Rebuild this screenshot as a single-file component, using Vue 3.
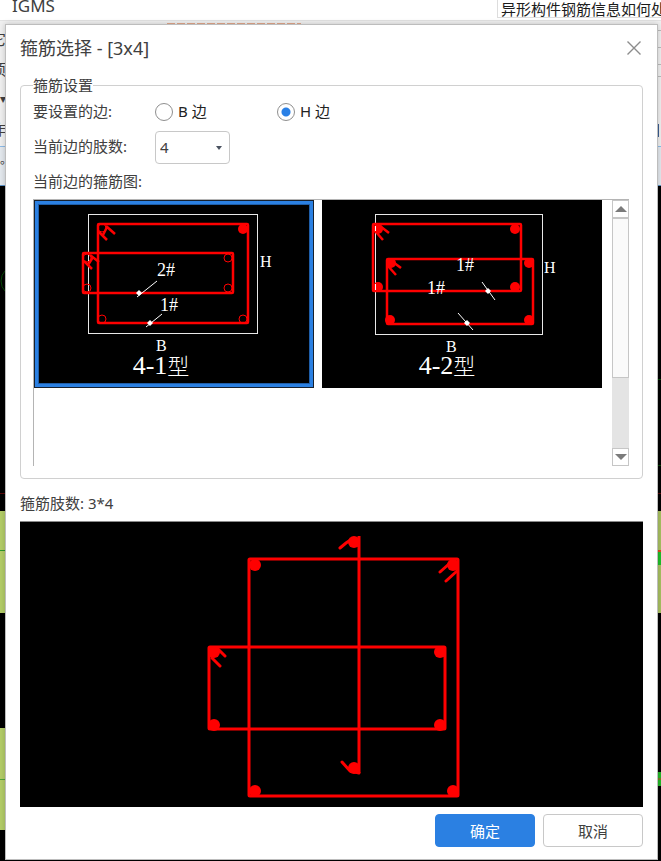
<!-- StirrupDialog.vue -->
<template>
  <div class="page">
    <div class="host-window">
      <header class="host-header">
        <span class="host-name">IGMS</span>
        <button type="button" class="host-tip">异形构件钢筋信息如何处</button>
      </header>
      <div class="host-ribbon">
        <div class="ribbon-marks"></div>
        <div class="ribbon-rows">
          <div class="ribbon-left">
            <span>它</span>
            <span>项</span>
            <span class="ribbon-arrow">▾</span>
            <span>作</span>
          </div>
          <div class="ribbon-right">
            <i class="ribbon-box"></i>
            <i class="ribbon-box small"></i>
            <i class="ribbon-bar"></i>
          </div>
        </div>
      </div>
      <div class="host-tabs"><span>。</span></div>
      <div class="host-canvas">
        <svg class="canvas-edge" viewBox="0 0 6 675" width="6" height="675" aria-hidden="true">
          <circle cx="16" cy="95" r="15" fill="none" stroke="#064a06" />
          <rect y="307" width="6" height="1" fill="#5a0808" />
          <rect y="325" width="6" height="102" fill="#b4cd68" />
          <rect y="364" width="6" height="1" fill="#2e9a2e" />
          <rect y="542" width="6" height="102" fill="#b4cd68" />
          <rect y="593" width="6" height="1" fill="#4ea53a" />
        </svg>
        <svg class="canvas-edge" viewBox="0 0 4 675" width="4" height="675" aria-hidden="true">
          <rect y="193" width="4" height="1" fill="#064a06" />
          <rect y="279" width="4" height="1" fill="#064a06" />
          <rect y="307" width="4" height="1" fill="#5a0808" />
          <rect y="325" width="4" height="102" fill="#a9c162" />
          <rect y="364" width="4" height="2" fill="#e04a20" />
          <rect y="366" width="4" height="13" fill="#1fc02a" />
          <rect y="586" width="4" height="14" fill="#24b828" />
          <rect y="592" width="4" height="2" fill="#7a7a20" />
        </svg>
      </div>
    </div>

    <div class="dialog" role="dialog" aria-labelledby="dialog-title">
      <div class="title-bar">
        <h1 id="dialog-title">箍筋选择 - [3x4]</h1>
        <button type="button" class="close-btn" aria-label="关闭">
          <svg viewBox="0 0 14 14" width="14" height="14">
            <path d="M0.5 0.5 L13.5 13.5 M13.5 0.5 L0.5 13.5" stroke="#8c8c8c" stroke-width="1.4" />
          </svg>
        </button>
      </div>

      <fieldset class="settings">
        <legend>箍筋设置</legend>
        <div class="form-row" role="radiogroup" aria-labelledby="side-label">
          <span id="side-label" class="row-label">要设置的边:</span>
          <label v-for="s in sides" :key="s" class="radio">
            <input v-model="side" type="radio" name="side" :value="s" />
            <span>{{ s }} 边</span>
          </label>
        </div>
        <div class="form-row limb-row">
          <label class="row-label" for="limbs">当前边的肢数:</label>
          <div class="select-wrap">
            <select id="limbs" v-model="limbs">
              <option v-for="n in limbOptions" :key="n" :value="n">{{ n }}</option>
            </select>
            <svg class="select-arrow" viewBox="0 0 6 4" width="6" height="4" aria-hidden="true">
              <path d="M0 0 H6 L3 4 Z" fill="#4a5260" />
            </svg>
          </div>
        </div>
        <div class="form-row">
          <span class="row-label">当前边的箍筋图:</span>
        </div>

        <div class="gallery">
          <div class="gallery-items">
            <button
              v-for="t in types"
              :key="t.name"
              type="button"
              class="type-item"
              :class="{ selected: t.name === current }"
              :aria-pressed="t.name === current"
              @click="current = t.name"
            >
              <svg viewBox="0 0 280 188">
                <rect
                  :x="t.frame[0]" :y="t.frame[1]" :width="t.frame[2]" :height="t.frame[3]"
                  class="concrete"
                />
                <rect
                  v-for="(r, i) in t.hoops" :key="'r' + i"
                  :x="r[0]" :y="r[1]" :width="r[2]" :height="r[3]" rx="1"
                  class="rebar"
                />
                <circle
                  v-for="(c, i) in t.rings" :key="'o' + i"
                  :cx="c[0]" :cy="c[1]" r="4" class="ring"
                />
                <circle
                  v-for="(c, i) in t.bars" :key="'c' + i"
                  :cx="c[0]" :cy="c[1]" r="5" class="bar"
                />
                <path :d="t.hooks" class="rebar" />
                <path :d="t.leaders" class="leader" />
                <path
                  v-for="(p, i) in t.points" :key="'p' + i"
                  :d="`M${p[0] - 3} ${p[1]} l3 -3 l3 3 l-3 3 Z`" fill="#fff"
                />
                <text
                  v-for="(m, i) in t.marks" :key="'m' + i"
                  :x="m.x" :y="m.y" :class="m.cls"
                >{{ m.text }}</text>
                <text :x="t.nameX" y="174" class="type-name">{{ t.name }}<tspan class="cjk">型</tspan></text>
              </svg>
            </button>
          </div>
          <div class="scrollbar">
            <button type="button" class="scroll-btn" aria-label="向上">
              <svg viewBox="0 0 12 6" width="12" height="6"><path d="M0 6 L6 0 L12 6 Z" fill="#7b7b7b" /></svg>
            </button>
            <div class="scroll-thumb"></div>
            <button type="button" class="scroll-btn end" aria-label="向下">
              <svg viewBox="0 0 12 6" width="12" height="6"><path d="M0 0 H12 L6 6 Z" fill="#7b7b7b" /></svg>
            </button>
          </div>
        </div>
      </fieldset>

      <p class="summary">箍筋肢数: 3*4</p>

      <div class="preview">
        <svg viewBox="0 0 623 285">
          <rect x="229" y="37" width="209" height="237" rx="1" class="rebar" />
          <rect x="189" y="125" width="236" height="82" rx="1" class="rebar" />
          <path d="M339 14 V251" class="rebar" />
          <circle v-for="(c, i) in previewBars" :key="i" :cx="c[0]" :cy="c[1]" r="6" class="bar" />
          <path :d="previewHooks" class="rebar hook" />
        </svg>
      </div>

      <div class="actions">
        <button type="button" class="btn primary">确定</button>
        <button type="button" class="btn">取消</button>
      </div>
    </div>
  </div>
</template>

<script setup>
import { ref } from 'vue';

const sides = ['B', 'H'];
const side = ref('H');
const limbOptions = [2, 3, 4, 5, 6];
const limbs = ref(4);
const current = ref('4-1');

const types = [
  {
    name: '4-1',
    nameX: 127,
    frame: [54.5, 14.5, 169, 119],
    hoops: [[64, 24, 150, 99], [49, 53, 150, 40]],
    rings: [[68, 28], [68, 119], [209, 119], [53, 58], [53, 88], [194, 58], [194, 88]],
    bars: [[209, 29]],
    hooks: 'M72 26 L81 34 M65 32 L73 40 M69 35 L73 27 M56 55 L65 62 M50 61 L58 69 M54 65 L59 57',
    leaders: 'M103 97 L123 81 M112 127 L128 114',
    points: [[105, 93], [116, 123]],
    marks: [
      { text: '2#', x: 123, y: 76, cls: 'num' },
      { text: '1#', x: 126, y: 111, cls: 'num' },
      { text: 'H', x: 226, y: 67, cls: 'letter' },
      { text: 'B', x: 122, y: 151, cls: 'letter' }
    ]
  },
  {
    name: '4-2',
    nameX: 125,
    frame: [53.5, 14.5, 167, 120],
    hoops: [[51, 24, 148, 67], [65, 59, 146, 65]],
    rings: [],
    bars: [[56, 29], [193, 29], [193, 87], [56, 87], [69, 63], [207, 63], [207, 120], [68, 120]],
    hooks: 'M58 26 L67 33 M54 32 L61 40 M71 62 L79 68 M66 66 L74 75',
    leaders: 'M160 82 L173 100 M136 113 L151 130 M53.5 26 V31 M53.5 84 V90',
    points: [[166, 91], [145, 123]],
    marks: [
      { text: '1#', x: 134, y: 71, cls: 'num' },
      { text: '1#', x: 105, y: 94, cls: 'num' },
      { text: 'H', x: 222, y: 73, cls: 'letter' },
      { text: 'B', x: 124, y: 152, cls: 'letter' }
    ]
  }
];

const previewBars = [
  [235, 43], [433, 43], [235, 269], [433, 269],
  [194, 130], [420, 130], [194, 203], [420, 203],
  [334, 20], [334, 246]
];
const previewHooks =
  'M320 26 L326 21 L332 17 M420 50 L430 41 M426 59 L437 49 M198 127 L205 134 M192 136 L200 144 M322 240 L330 249 L339 251';
</script>

<style>
body {
  margin: 0;
}
</style>

<style scoped>
.page {
  position: relative;
  min-height: 100vh;
  box-sizing: border-box;
  padding: 24px 3px 0 5px;
  overflow: hidden;
  font-family: 'Noto Sans', 'Noto Sans CJK SC', sans-serif;
  font-size: 15px;
  color: #404040;
}

button,
select {
  font: inherit;
  color: inherit;
}

/* Main window behind the dialog */
.host-window {
  position: absolute;
  inset: 0;
  display: flex;
  flex-direction: column;
  overflow: hidden;
  background: #fff;
}

.host-header {
  display: flex;
  justify-content: space-between;
  height: 20px;
  border-bottom: 1px solid #e2e2e2;
  overflow: hidden;
}

.host-name {
  padding-left: 12px;
  font-size: 17px;
  line-height: 12px;
}

.host-tip {
  width: 164px;
  height: 18px;
  padding: 0 0 0 3px;
  border: 1px solid #ddd;
  border-width: 0 0 1px 1px;
  background: #fff;
  color: #1c1c1c;
  line-height: 14px;
  white-space: nowrap;
  overflow: hidden;
}

.host-ribbon {
  height: 125px;
  background: #f0f0f0;
}

.ribbon-marks {
  width: 134px;
  height: 1px;
  margin: 2px 0 0 167px;
  background: repeating-linear-gradient(90deg, #e3a88c 0 8px, #f0f0f0 8px 10px);
}

.ribbon-rows {
  display: flex;
  justify-content: space-between;
}

.ribbon-left {
  display: flex;
  flex-direction: column;
  align-items: flex-end;
  gap: 8px;
  width: 6px;
  padding-top: 4px;
  line-height: 22px;
}

.ribbon-arrow {
  font-size: 12px;
}

.ribbon-right {
  display: flex;
  flex-direction: column;
  gap: 16px;
  width: 3px;
  padding-top: 6px;
}

.ribbon-box {
  height: 16px;
  border: 1px solid #bbb;
  border-width: 1px 0;
}

.ribbon-box.small {
  height: 11px;
}

.ribbon-bar {
  width: 1px;
  height: 13px;
  margin-top: 31px;
  background: #3c5f92;
}

.host-tabs {
  height: 38px;
  border-top: 1px solid #8dbbe8;
  border-bottom: 1px solid #5c93c8;
  background: #e4e9ee;
  font-size: 12px;
  line-height: 26px;
}

.host-canvas {
  flex: 1;
  display: flex;
  justify-content: space-between;
  background: #000;
}

.canvas-edge {
  display: block;
}

/* Dialog */
.dialog {
  position: relative;
  box-sizing: border-box;
  padding: 0 14px 12px;
  border: 1px solid #bdbdbd;
  background: #fff;
  box-shadow: 0 0 6px rgba(0, 0, 0, 0.2);
}

.title-bar {
  display: flex;
  align-items: center;
  justify-content: space-between;
  height: 46px;
  margin-bottom: 4px;
}

.title-bar h1 {
  margin: 0;
  padding-bottom: 2px;
  font-size: 18px;
  font-weight: 400;
}

.close-btn {
  display: flex;
  padding: 2px;
  border: 0;
  background: none;
}

.settings {
  min-width: 0;
  margin: 0;
  padding: 0 13px 12px 12px;
  border: 1px solid #d0d0d0;
  border-radius: 4px;
}

.settings legend {
  padding: 0;
  line-height: 20px;
}

.form-row {
  display: flex;
  align-items: center;
  height: 34px;
}

.limb-row {
  height: 36px;
}

.row-label {
  width: 122px;
  padding-bottom: 3px;
  white-space: nowrap;
}

.radio {
  display: flex;
  align-items: center;
  gap: 5px;
  width: 122px;
  color: #222;
}

.radio span {
  padding-bottom: 3px;
}

.radio input {
  appearance: none;
  width: 18px;
  height: 18px;
  margin: 0;
  border: 1px solid #8f8f8f;
  border-radius: 50%;
  background: #fff;
}

.radio input:checked {
  background: radial-gradient(circle, #2a80e6 0 4px, #fff 5px);
}

.select-wrap {
  position: relative;
}

.select-wrap select {
  appearance: none;
  display: block;
  width: 75px;
  height: 33px;
  padding: 0 4px;
  border: 1px solid #c8c8c8;
  border-radius: 4px;
  background: #fff;
}

.select-arrow {
  position: absolute;
  top: 15px;
  right: 8px;
  pointer-events: none;
}

.gallery {
  display: flex;
  height: 266px;
  border-top: 1px solid #b4b4b4;
  border-left: 1px solid #b4b4b4;
}

.gallery-items {
  flex: 1;
  display: grid;
  grid-template-columns: repeat(2, minmax(0, 1fr));
  gap: 8px;
  align-items: start;
  padding-right: 10px;
}

.type-item {
  display: block;
  padding: 0;
  border: 0;
  background: #000;
}

.type-item svg {
  display: block;
  width: 100%;
}

.type-item.selected {
  box-shadow: inset 0 0 0 1px #17202c, inset 0 0 0 4px #2b80e2, inset 0 0 0 5px #1f5ea8;
}

/* Drawing parts */
.concrete {
  fill: none;
  stroke: #e8e8e8;
  stroke-width: 1;
}

.rebar {
  fill: none;
  stroke: #f00;
  stroke-width: 3;
}

.type-item .rebar {
  stroke-width: 2.5;
}

.hook {
  stroke-linecap: round;
}

.ring {
  fill: none;
  stroke: #f00;
  stroke-width: 1;
}

.bar {
  fill: #f00;
}

.leader {
  fill: none;
  stroke: #fff;
  stroke-width: 1;
}

.num,
.letter,
.type-name {
  fill: #fff;
  font-family: 'Liberation Serif', 'Noto Sans CJK SC', serif;
  font-size: 18px;
}

.letter {
  font-size: 16px;
}

.type-name {
  font-size: 26px;
  text-anchor: middle;
}

.cjk {
  font-size: 22px;
  font-weight: 300;
}

.scrollbar {
  display: flex;
  flex-direction: column;
  width: 17px;
  background: #e4e4e4;
}

.scroll-btn {
  display: flex;
  align-items: center;
  justify-content: center;
  height: 18px;
  padding: 0;
  border: 1px solid #c6c6c6;
  background: #fff;
}

.scroll-btn.end {
  margin-top: auto;
}

.scroll-thumb {
  box-sizing: border-box;
  height: 160px;
  border: 1px solid #c6c6c6;
  background: #fafafa;
}

.summary {
  margin: 13px 0 7px;
  line-height: 22px;
}

.preview {
  border-top: 1px solid #8a8a8a;
  background: #000;
}

.preview svg {
  display: block;
  width: 100%;
}

.actions {
  display: flex;
  justify-content: flex-end;
  gap: 8px;
  padding-top: 7px;
}

.btn {
  width: 100px;
  height: 33px;
  padding: 0;
  border: 1px solid #c8c8c8;
  border-radius: 4px;
  background: #fff;
}

.btn.primary {
  border-color: #2b80e2;
  background: #2b80e2;
  color: #fff;
}
</style>
